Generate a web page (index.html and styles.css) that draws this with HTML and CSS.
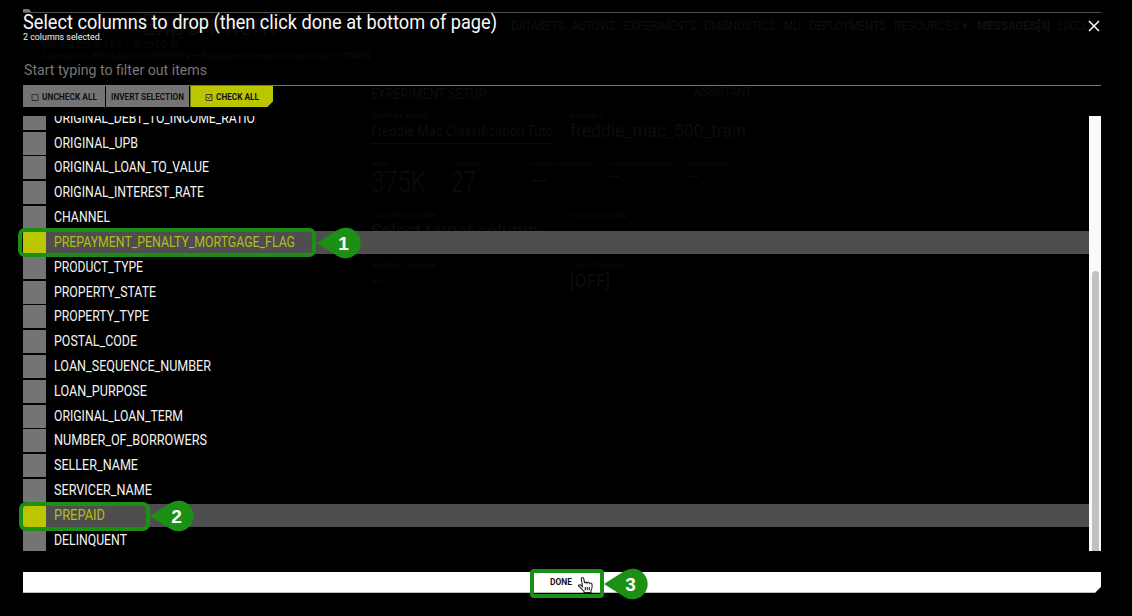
FILE: index.html
```html
<!DOCTYPE html>
<html lang="en">
<head>
<meta charset="utf-8">
<title>Select columns to drop</title>
<link rel="stylesheet" href="styles.css">
</head>
<body>
<div class="backdrop" aria-hidden="true">
  <div class="brand">
    <div class="brand-title"><span data-w="136">Experiment</span></div>
    <div class="brand-line"><span data-w="134">DRIVERLESS AI 1.8.0 — AI TO DO AI</span></div>
    <div class="brand-line"><span data-w="327">Licensed to H2O Aquarium (SN35079 — Evaluation License), Current User — ADMIN</span></div>
  </div>
  <div class="nav">
    <span data-w="53">DATASETS</span><span data-w="43">AUTOVIZ</span><span data-w="72">EXPERIMENTS</span><span data-w="71">DIAGNOSTICS</span><span data-w="17">MLI</span><span data-w="77">DEPLOYMENTS</span><span data-w="74">RESOURCES ▾</span><b data-w="73">MESSAGES[3]</b><span data-w="38">LOGOUT</span>
  </div>
  <div class="setup">
    <div class="setup-head"><span data-w="115">EXPERIMENT SETUP</span><span class="assistant" data-w="58">ASSISTANT</span></div>
    <div class="pair names">
      <div><small data-w="58">DISPLAY NAME</small><p class="field"><span data-w="182">Freddie Mac Classification Tuto</span></p></div>
      <div><small data-w="34">DATASET</small><p class="dataset"><span data-w="176">freddie_mac_500_train</span></p></div>
    </div>
    <div class="stats">
      <div><small data-w="18">ROWS</small><p><span data-w="55">375K</span></p></div>
      <div><small data-w="29">COLUMNS</small><p><span data-w="25">27</span></p></div>
      <div><small data-w="60">DROPPED COLUMNS</small><p class="dash"><span data-w="18">--</span></p></div>
      <div><small data-w="62">VALIDATION DATASET</small><p class="dash small">--</p></div>
      <div><small data-w="42">TEST DATASET</small><p class="dash small">--</p></div>
    </div>
    <div class="pair targets">
      <div><small data-w="65">TARGET COLUMN</small><p><span data-w="167">Select target column</span></p></div>
      <div><small data-w="57">FOLD COLUMN</small></div>
    </div>
    <div class="pair weights">
      <div><small data-w="66">WEIGHT COLUMN</small><p>--</p></div>
      <div><small data-w="54">TIME COLUMN</small><p><span data-w="40">[OFF]</span></p></div>
    </div>
  </div>
</div>

<main class="dialog">
  <header class="dialog-head">
    <div>
      <h1><span data-w="474">Select columns to drop (then click done at bottom of page)</span></h1>
      <p class="count"><span data-w="79">2 columns selected.</span></p>
    </div>
    <svg class="close" viewBox="0 0 12 12"><path d="M1 1 11 11M11 1 1 11"/></svg>
  </header>
  <div class="filter"><span data-w="183">Start typing to filter out items</span></div>
  <div class="actions">
    <div class="btn uncheck"><svg viewBox="0 0 8 8"><path d="M1 1.5H7V7.5H1Z"/></svg><span data-w="55">UNCHECK ALL</span></div>
    <div class="btn invert"><span data-w="73">INVERT SELECTION</span></div>
    <div class="btn check"><svg viewBox="0 0 8 8"><path d="M1 1.5H7V7.5H1ZM2.3 4.2 3.7 5.8 6.2 2.2"/></svg><span data-w="43">CHECK ALL</span></div>
  </div>
  <div class="list">
    <div class="rows">
      <div class="row"><i></i><span data-w="201">ORIGINAL_DEBT_TO_INCOME_RATIO</span></div>
      <div class="row"><i></i><span data-w="84">ORIGINAL_UPB</span></div>
      <div class="row"><i></i><span data-w="155">ORIGINAL_LOAN_TO_VALUE</span></div>
      <div class="row"><i></i><span data-w="150">ORIGINAL_INTEREST_RATE</span></div>
      <div class="row"><i></i><span data-w="56">CHANNEL</span></div>
      <div class="row on"><i></i><span data-w="241">PREPAYMENT_PENALTY_MORTGAGE_FLAG</span></div>
      <div class="row"><i></i><span data-w="89">PRODUCT_TYPE</span></div>
      <div class="row"><i></i><span data-w="102">PROPERTY_STATE</span></div>
      <div class="row"><i></i><span data-w="95">PROPERTY_TYPE</span></div>
      <div class="row"><i></i><span data-w="83">POSTAL_CODE</span></div>
      <div class="row"><i></i><span data-w="157">LOAN_SEQUENCE_NUMBER</span></div>
      <div class="row"><i></i><span data-w="93">LOAN_PURPOSE</span></div>
      <div class="row"><i></i><span data-w="129">ORIGINAL_LOAN_TERM</span></div>
      <div class="row"><i></i><span data-w="153">NUMBER_OF_BORROWERS</span></div>
      <div class="row"><i></i><span data-w="84">SELLER_NAME</span></div>
      <div class="row"><i></i><span data-w="98">SERVICER_NAME</span></div>
      <div class="row on"><i></i><span data-w="51">PREPAID</span></div>
      <div class="row"><i></i><span data-w="73">DELINQUENT</span></div>
    </div>
    <div class="track"><div class="thumb"></div></div>
  </div>
  <div class="done"><span data-w="22">DONE</span></div>
  <svg class="tab" viewBox="0 0 8 3"><path d="M0 0H6L8 3H0Z"/></svg>
</main>

<div class="ring ring-1"></div>
<div class="ring ring-2"></div>
<div class="ring ring-3"></div>
<svg class="pin pin-1" viewBox="0 0 45 32"><path d="M0 16 20 3.2A15.3 15.3 0 1 1 20 28.8Z"/><text x="26.5" y="23">1</text></svg>
<svg class="pin pin-2" viewBox="0 0 45 32"><path d="M0 16 20 3.2A15.3 15.3 0 1 1 20 28.8Z"/><text x="26.5" y="23">2</text></svg>
<svg class="pin pin-3" viewBox="0 0 45 32"><path d="M0 16 20 3.2A15.3 15.3 0 1 1 20 28.8Z"/><text x="26.5" y="23">3</text></svg>
<svg class="hand" viewBox="0 0 16 18"><path d="M5 10.5 3.8 3.2C3.5 1.2 5.8.8 6.2 2.7L7.2 7.2C7.6 5.7 9.2 5.8 9.5 7 10 5.9 11.7 6.1 12 7.4 12.9 6.6 14.6 7.2 14.6 8.7 14.9 12 14.4 13 13.5 14.5V16.5H6.5V15.3C4.7 14 3.1 11.5 1.3 10.3.6 9.5 1.4 8.5 2.6 8.8 3.5 9.1 4.2 9.8 5 10.5ZM7.8 11V14.3M9.8 11V14.3M11.8 11V14.3"/></svg>
<script src="fit.js"></script>
</body>
</html>
```

FILE: styles.css
```css
* { box-sizing: border-box; margin: 0; padding: 0; }
body { width: 1132px; height: 616px; overflow: hidden; background: #000; color: #f4f4f4; font-family: Roboto, "Liberation Sans", sans-serif; position: relative; }
[data-w] { display: inline-block; white-space: nowrap; transform-origin: left center; }

.backdrop { position: absolute; inset: 0; color: #0d0d0c; overflow: hidden; }
.brand { position: absolute; left: 43px; top: 10px; white-space: nowrap; }
.brand-title { padding-left: 98px; font-size: 30px; line-height: 30px; font-weight: 300; }
.brand-line { font-size: 9px; line-height: 10.5px; }
.nav { position: absolute; left: 511px; top: 18px; display: flex; gap: 8.4px; font-size: 13px; line-height: 15px; white-space: nowrap; color: #10100a; }
.setup { position: absolute; left: 371px; top: 86px; width: 600px; }
.setup-head { display: flex; font-size: 14px; line-height: 16px; height: 25px; }
.assistant { margin-left: 208px; font-size: 12px; line-height: 12px; }
.setup small { display: table; font-size: 8px; line-height: 9px; }
.pair { display: grid; grid-template-columns: 199px 1fr; }
.names { height: 49px; }
.field { width: 183px; border-bottom: 1px solid #0c0c0a; font-size: 15px; line-height: 23px; }
.dataset { font-size: 18px; line-height: 21px; }
.stats { display: grid; grid-template-columns: repeat(5, 79.5px); height: 51px; }
.stats small { font-size: 6px; line-height: 8px; }
.stats p { font-size: 29px; line-height: 28px; font-weight: 300; }
.stats .dash { font-size: 26px; line-height: 24px; }
.stats .dash.small { font-size: 18px; line-height: 16px; }
.targets { height: 50px; }
.targets p, .weights p { font-size: 19px; line-height: 21px; }

.dialog { position: relative; width: 1078.4px; margin: 12px 0 0 22.7px; }
.dialog-head { display: flex; justify-content: space-between; height: 44px; border-top: 1px solid #505050; }
.tab { position: absolute; left: 0; top: -3px; width: 8px; height: 3px; fill: #777; }
h1 { font-size: 19.5px; line-height: 19px; font-weight: 400; height: 18px; color: #f8f8f8; }
.count { font-size: 9.5px; line-height: 11px; }
.close { width: 12px; height: 12px; margin: 7px .6px 0 0; }
.close path { stroke: #fff; stroke-width: 1.5; fill: none; }
.filter { height: 30px; padding-left: 1px; font-size: 15px; line-height: 28px; font-weight: 400; color: #777; border-bottom: 1px solid #7c8310; }
.actions { display: flex; gap: 1px; height: 21px; }
.btn { display: flex; align-items: center; justify-content: center; gap: 3px; height: 21px; background: #747474; color: #111; font-size: 9.5px; font-weight: 700; }
.btn svg { width: 8px; height: 8px; }
.btn path { fill: none; stroke: #222; stroke-width: .8; }
.uncheck { width: 82.7px; }
.invert { width: 83px; }
.check { width: 83px; background: #bac600; clip-path: polygon(0 0, 100% 0, 100% 15px, 77px 100%, 0 100%); }
.list { display: flex; height: 434.7px; margin-top: 9px; overflow: hidden; }
.rows { flex: 1; margin-top: -9.2px; }
.row { display: flex; align-items: center; gap: 8.3px; height: 23px; margin-bottom: 1.82px; font-size: 14px; line-height: 23px; }
.row i { width: 23px; height: 23px; background: #747474; }
.row.on { background: #4e4e4e; color: #b4bd17; }
.row.on i { background: #bac600; }
.track { width: 12.4px; background: #fafafa; padding: 155px 2.5px 0 3.2px; }
.thumb { height: 280px; background: #c1c1c1; border-radius: 4px 4px 0 0; }
.done { height: 21px; margin-top: 21px; padding-right: 2px; text-align: center; background: #fff; color: #111; font-size: 9px; line-height: 21px; font-weight: 700; clip-path: polygon(0 0, 100% 0, 100% 15px, 1072.5px 100%, 0 100%); }

.ring { position: absolute; border: 4px solid #1c8f15; border-radius: 7px; }
.ring-1 { left: 18px; top: 228px; width: 298px; height: 29px; }
.ring-2 { left: 19px; top: 502px; width: 131px; height: 29px; }
.ring-3 { left: 530px; top: 569px; width: 74px; height: 29px; border-radius: 4px; }
.pin { position: absolute; width: 45px; height: 32px; overflow: visible; }
.pin path { fill: #1c8f15; }
.pin text { fill: #fff; font: 700 19px "Liberation Sans", sans-serif; text-anchor: middle; }
.pin-1 { left: 316.5px; top: 226.5px; }
.pin-2 { left: 150px; top: 500px; }
.pin-3 { left: 604px; top: 568px; }
.hand { position: absolute; left: 577px; top: 576px; width: 17px; height: 18px; }
.hand path { fill: #fff; stroke: #222; stroke-width: 1.1; }
```

FILE: fit.js
```js
// Condense each label horizontally to its column width.
document.querySelectorAll('[data-w]').forEach(function (el) {
  var natural = el.getBoundingClientRect().width;
  var wanted = Number(el.dataset.w);
  el.style.transform = 'scaleX(' + wanted / natural + ')';
  el.style.marginRight = wanted - natural + 'px';
});
```
